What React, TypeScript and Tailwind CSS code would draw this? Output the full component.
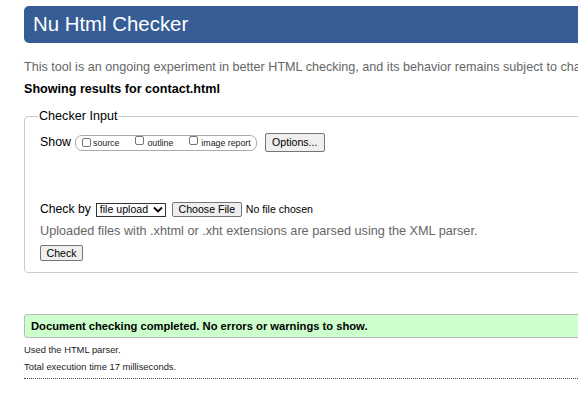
const Checkbox = () => (
  <span className="inline-block w-[9px] h-[9px] border border-[#767676] rounded-[2px] bg-white shrink-0" />
);

const Btn = ({ children, className = "" }: { children: React.ReactNode; className?: string }) => (
  <span
    className={
      "inline-flex items-center justify-center border border-[#767676] rounded-[2px] bg-[#efefef] text-black text-[10.6px] leading-none " +
      className
    }
  >
    {children}
  </span>
);

const App = () => {
  return (
    <div className="w-[578px] h-[401px] overflow-hidden bg-white font-['Liberation_Sans',Arial,sans-serif]">
      <div className="w-[780px] pl-6 pt-[6px]">
        <div className="h-[37px] rounded-[5px] bg-[#365d95] pl-[9px] flex items-center text-white text-[20.4px] leading-none">
          Nu Html Checker
        </div>

        <p className="mt-[15px] text-[12.6px] leading-[18px] text-[#666] whitespace-nowrap">
          This tool is an ongoing experiment in better HTML checking, and its behavior remains subject to change
        </p>
        <p className="mt-[4px] text-[12.6px] leading-[18px] font-bold text-black whitespace-nowrap">
          Showing results for contact.html
        </p>

        <fieldset className="mt-[9px] border border-[#cccccc] rounded-[4px] pl-[15px] pt-[8px] pb-[11px]">
          <legend className="ml-[-2px] px-[1px] text-[12.6px] leading-[18px] text-black">Checker Input</legend>

          <div className="flex items-center h-[19px] text-[12.4px] text-black">
            <span>Show</span>
            <div className="ml-[4px] flex items-center h-[16px] border border-[#aaaaaa] rounded-[7px] pl-[6px] pr-[5px] text-[8.8px] text-[#222]">
              <Checkbox />
              <span className="ml-[2px] mt-[3px]">source</span>
              <span className="ml-[16px]"><Checkbox /></span>
              <span className="ml-[3px] mt-[3px]">outline</span>
              <span className="ml-[16px]"><Checkbox /></span>
              <span className="ml-[3px] mt-[3px]">image report</span>
            </div>
            <Btn className="ml-[8px] w-[60px] h-[19px]">Options...</Btn>
          </div>

          <div className="mt-[50px] flex items-center h-[15px] text-[12.2px] text-black">
            <span>Check by</span>
            <span className="ml-[5px] w-[70px] h-[14px] border border-[#333] bg-white flex items-center pl-[3px] pr-[2px] text-[10.6px] leading-none">
              <span className="flex-1">file upload</span>
              <svg width="10" height="7" viewBox="0 0 10 7" className="shrink-0">
                <path d="M1 1.5 L5 5.5 L9 1.5" fill="none" stroke="#000" strokeWidth="1.8" />
              </svg>
            </span>
            <Btn className="ml-[6px] w-[70px] h-[15px]">Choose File</Btn>
            <span className="ml-[4px] text-[10.6px] leading-none">No file chosen</span>
          </div>

          <p className="mt-[5px] text-[12.7px] leading-[18px] text-[#666] whitespace-nowrap">
            Uploaded files with .xhtml or .xht extensions are parsed using the XML parser.
          </p>

          <div className="mt-[5px] flex">
            <Btn className="w-[43px] h-[16px]">Check</Btn>
          </div>
        </fieldset>

        <div className="mt-[41px] h-[24px] border border-[#bbbbbb] rounded-[3px] bg-[#ccffcc] pl-[6px] flex items-center text-[11.2px] font-bold text-black whitespace-nowrap">
          Document checking completed. No errors or warnings to show.
        </div>

        <p className="mt-[6px] text-[9.4px] leading-[12px] text-[#222]">Used the HTML parser.</p>
        <p className="mt-[5px] text-[9.4px] leading-[12px] text-[#222]">Total execution time 17 milliseconds.</p>
        <div className="mt-[5px] border-t border-dotted border-[#444]" />
      </div>
    </div>
  );
};

export default App;
